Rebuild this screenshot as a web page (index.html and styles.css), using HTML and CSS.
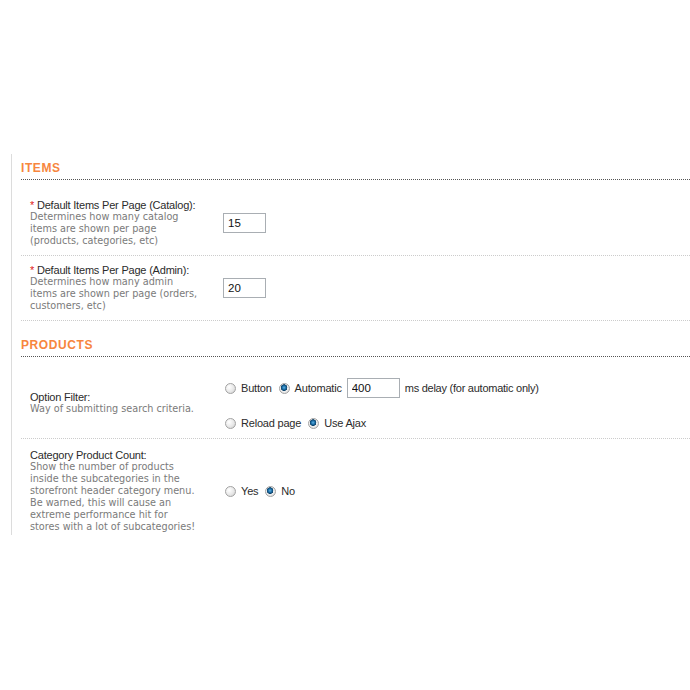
FILE: index.html
```html
<!DOCTYPE html>
<html lang="en">
<head>
    <meta charset="UTF-8">
    <title>Settings</title>
    <link rel="stylesheet" href="styles.css">
</head>
<body>
    <div class="settings">
        <h2 class="section-title">Items</h2>
        <div class="setting-row">
            <div class="setting-label">
                <div class="label-name"><span class="required">*</span> Default Items Per Page (Catalog):</div>
                <div class="label-desc">Determines how many catalog<br>items are shown per page<br>(products, categories, etc)</div>
            </div>
            <div class="setting-control">
                <input type="text" class="text-input small" value="15">
            </div>
        </div>
        <div class="setting-row">
            <div class="setting-label">
                <div class="label-name"><span class="required">*</span> Default Items Per Page (Admin):</div>
                <div class="label-desc">Determines how many admin<br>items are shown per page (orders,<br>customers, etc)</div>
            </div>
            <div class="setting-control">
                <input type="text" class="text-input small" value="20">
            </div>
        </div>

        <h2 class="section-title second">Products</h2>
        <div class="setting-row">
            <div class="setting-label">
                <div class="label-name">Option Filter:</div>
                <div class="label-desc">Way of submitting search criteria.</div>
            </div>
            <div class="setting-control stacked">
                <div class="control-line tall">
                    <label class="radio"><input type="radio" name="filter_type"> Button</label>
                    <label class="radio"><input type="radio" name="filter_type" checked> Automatic</label>
                    <input type="text" class="text-input delay" value="400">
                    <span class="hint">ms delay (for automatic only)</span>
                </div>
                <div class="control-line">
                    <label class="radio"><input type="radio" name="filter_mode"> Reload page</label>
                    <label class="radio"><input type="radio" name="filter_mode" checked> Use Ajax</label>
                </div>
            </div>
        </div>
        <div class="setting-row last">
            <div class="setting-label">
                <div class="label-name">Category Product Count:</div>
                <div class="label-desc">Show the number of products<br>inside the subcategories in the<br>storefront header category menu.<br>Be warned, this will cause an<br>extreme performance hit for<br>stores with a lot of subcategories!</div>
            </div>
            <div class="setting-control">
                <label class="radio"><input type="radio" name="cat_count"> Yes</label>
                <label class="radio"><input type="radio" name="cat_count" checked> No</label>
            </div>
        </div>
    </div>
</body>
</html>
```

FILE: styles.css
```css
body {
    margin: 0;
    padding: 0;
    background-color: #fff;
    font-family: "Liberation Sans", Arial, sans-serif;
    font-size: 11px;
    color: #333;
}

.settings {
    margin: 154px 0 0 11px;
    padding: 7px 0 2px 9px;
    border-left: 1px solid #dcdcdc;
}

.section-title {
    margin: 0 0 11px;
    padding-bottom: 4px;
    border-bottom: 1px dotted #555;
    font-size: 12px;
    line-height: 14px;
    font-weight: bold;
    letter-spacing: 0.6px;
    text-transform: uppercase;
    color: #f7863e;
}

.section-title.second {
    margin-top: 17px;
}

.setting-row {
    display: flex;
    align-items: center;
    padding: 8px 0;
    border-bottom: 1px dotted #ccc;
}

.setting-row.last {
    padding: 10px 0 0;
    border-bottom: none;
}

.setting-label {
    width: 192px;
    padding-left: 9px;
    line-height: 12px;
}

.label-name {
    letter-spacing: -0.2px;
    color: #2b2b2b;
}

.required {
    color: #e02020;
}

.label-desc {
    font-family: "DejaVu Sans", Verdana, sans-serif;
    font-size: 9.7px;
    color: #7a7a7a;
}

.setting-control {
    display: flex;
    align-items: center;
    padding-left: 1px;
}

.setting-control.stacked {
    flex-direction: column;
    align-items: flex-start;
    gap: 16px;
}

.control-line {
    display: flex;
    align-items: center;
    height: 14px;
}

.control-line.tall {
    height: 24px;
}

.text-input {
    box-sizing: border-box;
    height: 20px;
    padding: 0 4px;
    border: 1px solid #a9aeb3;
    font-family: "Liberation Sans", Arial, sans-serif;
    font-size: 11.5px;
    color: #111;
}

.text-input.small {
    width: 43px;
}

.text-input.delay {
    width: 53px;
    margin-right: 5px;
}

.radio {
    display: inline-flex;
    align-items: center;
    margin-right: 5px;
    letter-spacing: -0.2px;
    color: #2b2b2b;
}

.radio input {
    appearance: none;
    -webkit-appearance: none;
    width: 11px;
    height: 11px;
    margin: 0 5px 0 2px;
    border: 1px solid #a2a2a2;
    border-radius: 50%;
    background: radial-gradient(circle at 35% 35%, #fff 0%, #e8e8e8 55%, #c9c9c9 100%);
}

.radio input:checked {
    background: radial-gradient(circle at 45% 40%, #5fb3e6 0%, #1d6ea6 25%, #0b3f66 42%, #f2f2f2 48%, #dcdcdc 80%, #c4c4c4 100%);
}

.hint {
    letter-spacing: -0.25px;
    color: #2b2b2b;
}
```
